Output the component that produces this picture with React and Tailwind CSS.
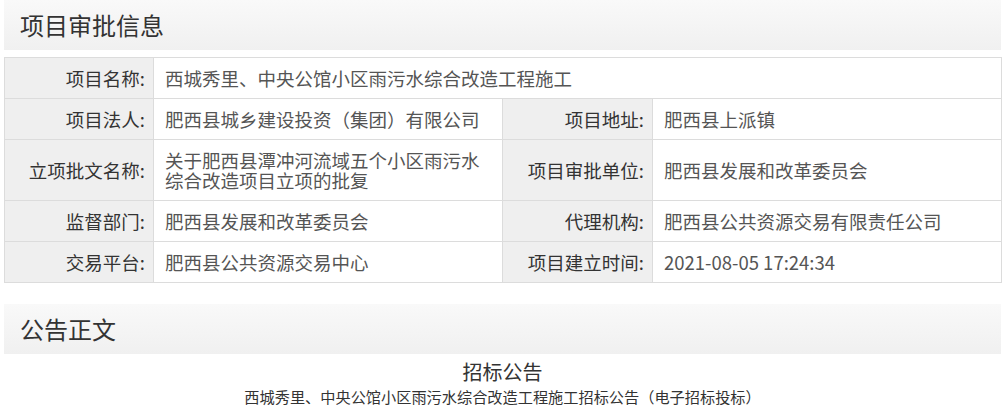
import React from 'react';

const font = { fontFamily: '"Noto Sans CJK SC", "Noto Sans", sans-serif' };

const rows = [
  [['项目名称:', '西城秀里、中央公馆小区雨污水综合改造工程施工']],
  [['项目法人:', '肥西县城乡建设投资（集团）有限公司'], ['项目地址:', '肥西县上派镇']],
  [['立项批文名称:', '关于肥西县潭冲河流域五个小区雨污水综合改造项目立项的批复'], ['项目审批单位:', '肥西县发展和改革委员会']],
  [['监督部门:', '肥西县发展和改革委员会'], ['代理机构:', '肥西县公共资源交易有限责任公司']],
  [['交易平台:', '肥西县公共资源交易中心'], ['项目建立时间:', '2021-08-05 17:24:34']],
];

const SectionHeader = ({ title }) => (
  <div className="h-[50px] flex items-center pl-[16px] bg-gradient-to-b from-[#f9f9f9] to-[#f0f0f0]">
    <h2 className="text-[24px] text-[#333] leading-none">{title}</h2>
  </div>
);

export default function App() {
  return (
    <div className="bg-white w-[1003px] h-[410px] overflow-hidden" style={font}>
      <div className="ml-[4px] w-[997px]">
        <SectionHeader title="项目审批信息" />

        <table className="mt-[7px] w-[997px] border-collapse table-fixed text-[18.5px] leading-[20px]">
          <colgroup>
            <col className="w-[149px]" />
            <col className="w-[349px]" />
            <col className="w-[150px]" />
            <col className="w-[349px]" />
          </colgroup>
          <tbody>
            {rows.map((row, i) => (
              <tr key={i}>
                {row.map(([label, value], j) => (
                  <React.Fragment key={j}>
                    <td className="border border-[#dcdcdc] bg-[#efefef] text-right pr-[8px] py-[10px] text-[#333] align-middle">
                      {label}
                    </td>
                    <td
                      colSpan={row.length === 1 ? 3 : 1}
                      className="border border-[#dcdcdc] bg-white pl-[11px] pr-[10px] py-[10px] text-[#555] align-middle"
                    >
                      {value}
                    </td>
                  </React.Fragment>
                ))}
              </tr>
            ))}
          </tbody>
        </table>

        <div className="mt-[21px]">
          <SectionHeader title="公告正文" />
        </div>

        <div className="text-center text-[#333]">
          <div className="mt-[6px] text-[20px] leading-[24px]">招标公告</div>
          <div className="mt-[2px] text-[15.2px] leading-[20px]">
            西城秀里、中央公馆小区雨污水综合改造工程施工招标公告（电子招标投标）
          </div>
        </div>
      </div>
    </div>
  );
}
